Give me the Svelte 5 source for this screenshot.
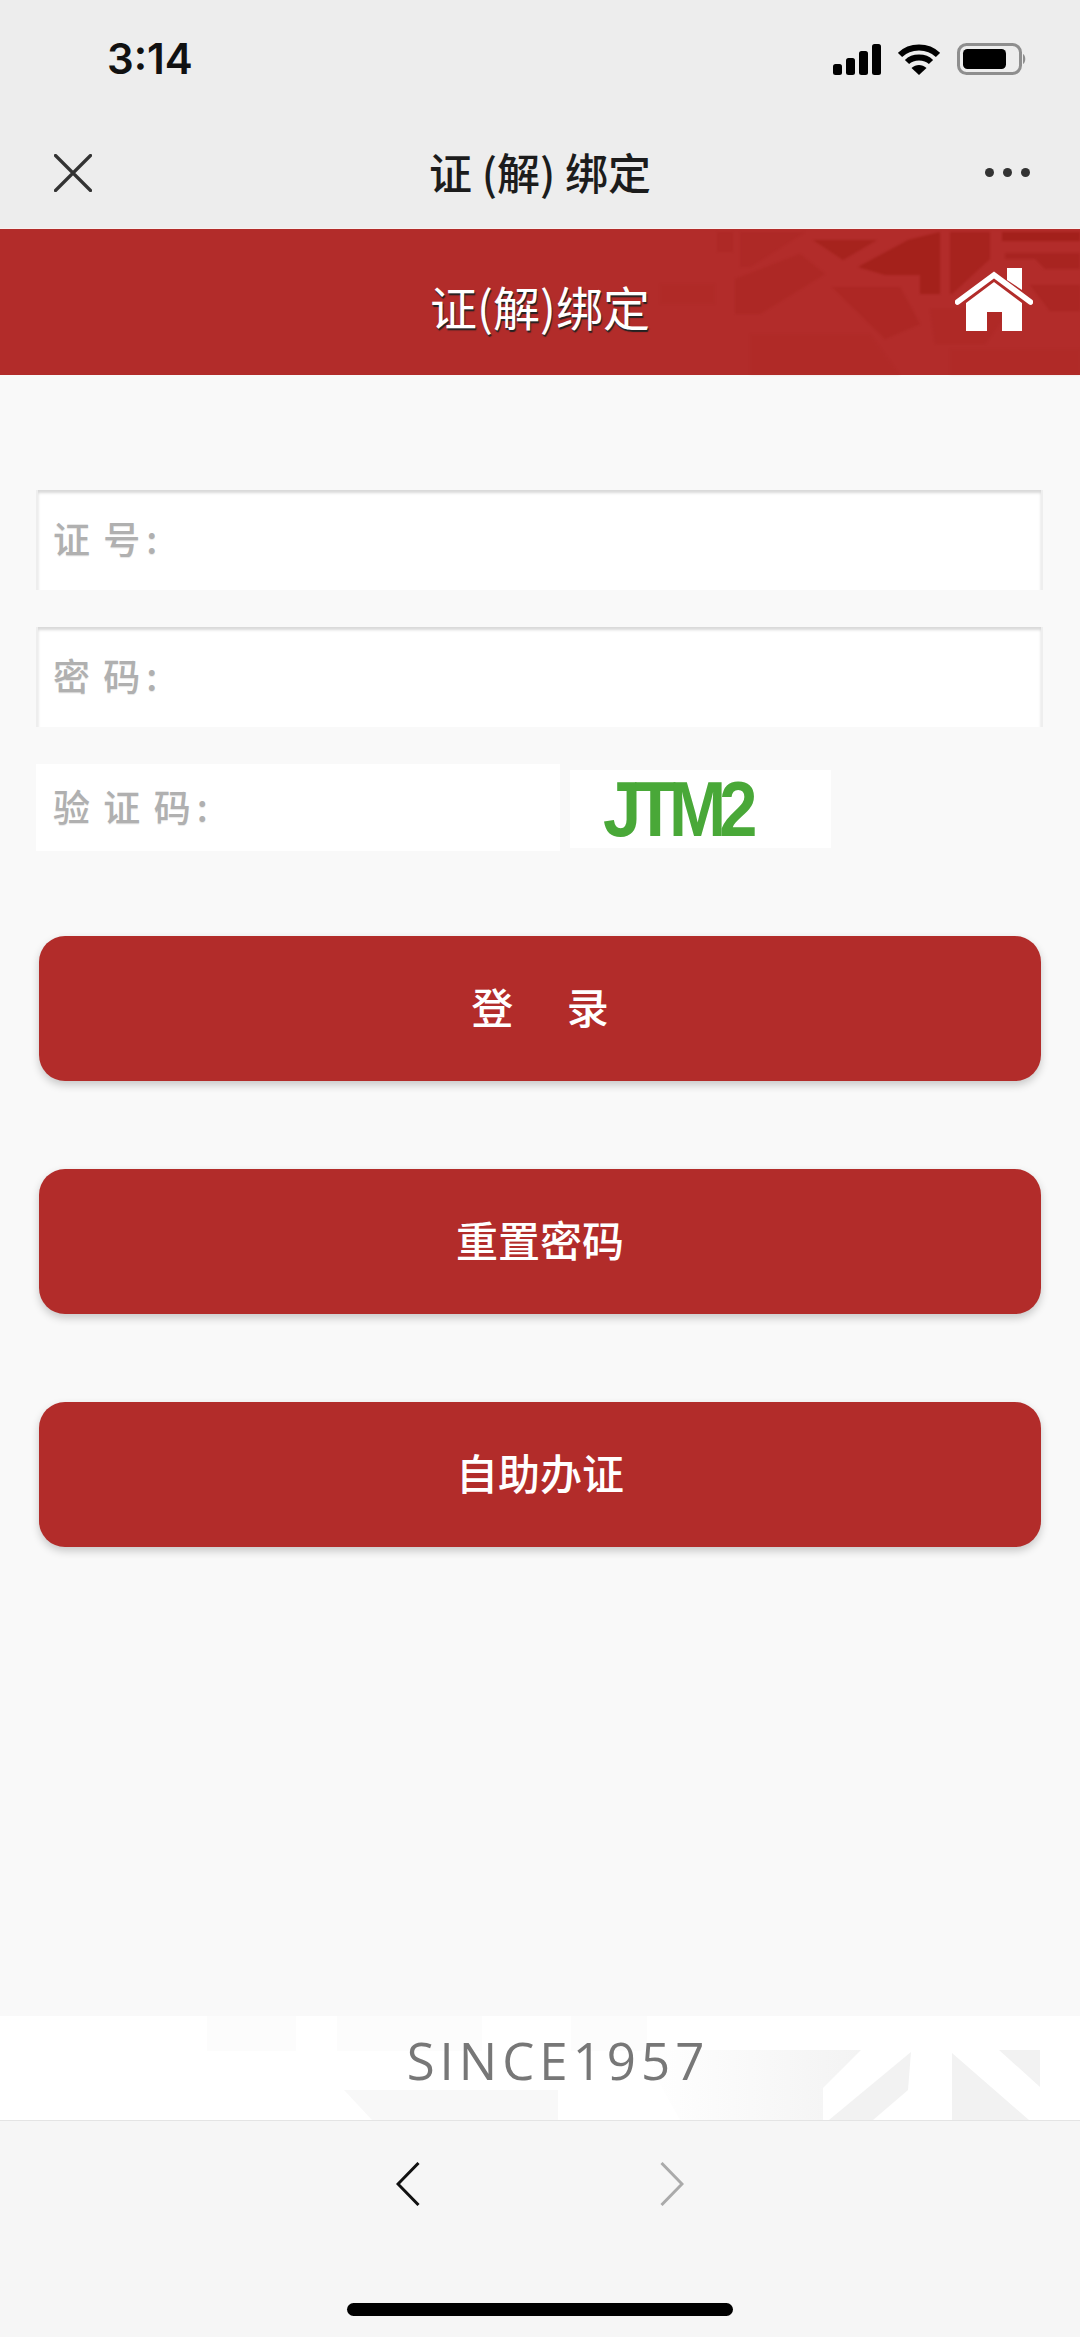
<script>
  const buttons = ['重置密码', '自助办证'];
</script>

<div class="page">
  <div class="chrome">
    <div class="status">
      <span class="time">3:14</span>
      <div class="status-icons">
        <svg width="48" height="31" viewBox="0 0 48 31" fill="#000">
          <rect x="0" y="20" width="9" height="11" rx="2.5" />
          <rect x="13" y="14" width="9" height="17" rx="2.5" />
          <rect x="26" y="7" width="9" height="24" rx="2.5" />
          <rect x="39" y="0" width="9" height="31" rx="2.5" />
        </svg>
        <svg width="42" height="31" viewBox="0 0 42 31" fill="none" stroke="#000" stroke-width="6">
          <path d="M2 11 C12 1 30 1 40 11" />
          <path d="M9 18 C15 12 27 12 33 18" />
          <path d="M21 31 L13.5 24 C18 20 24 20 28.5 24 Z" fill="#000" stroke="none" />
        </svg>
        <svg class="battery" width="69" height="32" viewBox="0 0 69 32" fill="none">
          <rect x="1.5" y="1.5" width="62" height="29" rx="8" stroke="#8e8e8e" stroke-width="3" />
          <rect x="6" y="6" width="43" height="20" rx="4.5" fill="#000" />
          <path d="M66 11 C69 12.5 69 19.5 66 21 Z" fill="#8e8e8e" />
        </svg>
      </div>
    </div>
    <div class="nav">
      <svg class="close" width="38" height="38" viewBox="0 0 38 38" stroke="#333" stroke-width="3.2" stroke-linecap="round">
        <path d="M1.5 1.5 L36.5 36.5 M36.5 1.5 L1.5 36.5" />
      </svg>
      <span class="nav-title">证 (解) 绑定</span>
      <div class="dots"><i></i><i></i><i></i></div>
    </div>
  </div>

  <header class="banner">
    <!-- faint fretwork behind the home icon -->
    <svg class="pattern" width="480" height="146" viewBox="0 0 480 146" fill="#a2201a">
      <path opacity="0.25" d="M117 3 H133 V23 H117 Z" />
      <path opacity="0.2" d="M140 3 H205 L150 38 H140 Z" />
      <path opacity="0.75" d="M213 11 H277 L243 31 Z" />
      <path opacity="0.9" d="M258 38 L308 11 L340 3 V65 H320 V46 H285 Z" />
      <path opacity="0.7" d="M350 3 H390 V30 L352 65 H350 Z" />
      <path opacity="0.95" d="M402 3 H480 V12 H402 Z" />
      <path opacity="0.6" d="M405 24 H480 V40 H445 L435 30 L405 30 Z" />
      <path opacity="0.45" d="M430 56 H480 V82 H450 Z" />
      <path opacity="0.3" d="M135 50 L200 25 L225 45 L160 85 H135 Z" />
      <path opacity="0.35" d="M232 58 L300 58 L320 95 L285 110 Z" />
      <path opacity="0.22" d="M330 80 H410 L385 115 H335 Z" />
      <path opacity="0.12" d="M60 55 H115 V75 H60 Z" />
      <path opacity="0.12" d="M150 105 H270 L300 146 H150 Z" />
      <path opacity="0.12" d="M350 120 H480 V146 H350 Z" />
    </svg>
    <h1>证(解)绑定</h1>
    <svg class="home" width="78" height="64" viewBox="0 0 78 64">
      <path d="M2.5 34 L39 7 L75.5 34" fill="none" stroke="#fff" stroke-width="5.5" stroke-linecap="round" />
      <path d="M52 12 V0 H67 V22 Z" fill="#fff" />
      <path d="M11 35 L39 14 L67 35 V63 H47 V44 H32 V63 H11 Z" fill="#fff" />
    </svg>
  </header>

  <main class="content">
    <form class="form">
      <label class="field"><span>证 号:</span><input type="text" /></label>
      <label class="field"><span>密 码:</span><input type="password" /></label>
      <div class="captcha-row">
        <label class="field captcha"><span>验 证 码:</span><input type="text" /></label>
        <div class="captcha-img"><span>JTM2</span></div>
      </div>
      <div class="actions">
        <button type="button" class="btn login">登 录</button>
        {#each buttons as label}
          <button type="button" class="btn">{label}</button>
        {/each}
      </div>
    </form>
  </main>

  <footer class="since">
    <svg class="since-bg" width="1080" height="104" viewBox="0 0 1080 104">
      <defs>
        <linearGradient id="fade" x1="0" x2="1" y1="0" y2="0">
          <stop offset="0" stop-color="#fff" />
          <stop offset="1" stop-color="#f3f3f3" />
        </linearGradient>
      </defs>
      <path fill="#fcfcfc" d="M207 0 H296 V35 H207 Z M337 0 H482 V35 H337 Z M571 0 H647 V35 H571 Z" />
      <path fill="#f8f8f8" d="M344 74 H558 V104 H372 Z" />
      <path fill="url(#fade)" d="M641 34 H861 L823 72 V104 H680 Z" />
      <path fill="#f2f2f2" d="M911 36 L908 74 L873 104 H829 Z" />
      <path fill="#f2f2f2" d="M952 37 L1029 104 H952 Z" />
      <path fill="#f2f2f2" d="M999 34 H1040 V71 Z" />
    </svg>
    <span>SINCE1957</span>
  </footer>

  <div class="toolbar">
    <div class="arrows">
      <svg width="24" height="44" viewBox="0 0 24 44" fill="none" stroke="#111" stroke-width="3">
        <path d="M22.5 1 L2 22 L22.5 43" />
      </svg>
      <svg width="24" height="44" viewBox="0 0 24 44" fill="none" stroke="#aaa" stroke-width="3">
        <path d="M1.5 1 L22 22 L1.5 43" />
      </svg>
    </div>
    <div class="home-bar"></div>
  </div>
</div>

<style>
  :global(body) {
    margin: 0;
    background: #f9f9f9;
  }
  .page {
    width: 1080px;
    height: 2337px;
    display: flex;
    flex-direction: column;
    font-family: "Noto Sans CJK SC", "Noto Sans", sans-serif;
    overflow: hidden;
  }
  .chrome {
    height: 229px;
    box-sizing: border-box;
    background: #ededed;
    border-bottom: 1px solid #f7f0ef;
    display: flex;
    flex-direction: column;
  }
  .status {
    height: 117px;
    box-sizing: border-box;
    padding: 27px 54px 0 107px;
    display: flex;
    justify-content: space-between;
    align-items: flex-start;
  }
  .time {
    font-family: Inter, sans-serif;
    font-size: 42px;
    font-weight: 600;
    line-height: 64px;
    color: #111;
  }
  .status-icons {
    display: flex;
    gap: 17px;
    align-items: center;
    margin-top: 16px;
  }
  .nav {
    flex: 1;
    display: flex;
    align-items: center;
    justify-content: space-between;
    padding: 0 50px 0 54px;
    position: relative;
  }
  .nav-title {
    position: absolute;
    left: 0;
    right: 0;
    top: 23px;
    text-align: center;
    font-size: 43px;
    font-weight: 500;
    line-height: 62px;
    color: #1c1c1c;
  }
  .dots {
    display: flex;
    gap: 9px;
  }
  .dots i {
    width: 9px;
    height: 9px;
    border-radius: 50%;
    background: #333;
  }
  .banner {
    height: 146px;
    background: #b22c2a;
    position: relative;
    display: flex;
    align-items: center;
    justify-content: center;
    flex-shrink: 0;
  }
  .banner h1 {
    margin: 6px 0 0;
    font-size: 47px;
    font-weight: 400;
    color: #fff;
    text-shadow: 1px 2px 1px #222;
    position: relative;
  }
  .pattern {
    position: absolute;
    right: 0;
    top: 0;
    filter: blur(1px);
  }
  .home {
    position: absolute;
    left: 955px;
    top: 39px;
  }
  .content {
    flex: 1;
    padding: 115px 37px 0 36px;
  }
  .form {
    display: flex;
    flex-direction: column;
  }
  .field {
    display: flex;
    align-items: center;
    height: 100px;
    box-sizing: border-box;
    border-left: 2px solid #eee;
    border-right: 2px solid #eee;
    padding: 0 15px 4px;
    background: #fff;
    box-shadow: inset 0 3px 3px #d9d9d9;
    margin-bottom: 37px;
  }
  .field span {
    flex-shrink: 0;
    color: #b0b0b0;
    font-size: 37px;
    font-weight: 500;
    letter-spacing: 6px;
    word-spacing: -7px;
    text-shadow: 0 1px 1px rgba(0, 0, 0, 0.1);
  }
  .field input {
    flex: 1;
    min-width: 0;
    height: 100%;
    border: none;
    outline: none;
    background: transparent;
  }
  .captcha-row {
    display: flex;
    align-items: flex-start;
    gap: 10px;
  }
  .field.captcha {
    width: 524px;
    height: 87px;
    margin-bottom: 0;
    border: none;
    padding: 0 17px 4px;
    box-shadow: none;
  }
  .captcha-img {
    width: 261px;
    height: 78px;
    margin-top: 6px;
    background: #fff;
    box-sizing: border-box;
    padding-left: 33px;
    display: flex;
    align-items: center;
  }
  .captcha-img span {
    font-family: "Liberation Sans", sans-serif;
    font-size: 78px;
    font-weight: 700;
    line-height: 78px;
    color: #49a838;
    letter-spacing: -8px;
    transform: scaleX(0.88);
    transform-origin: left center;
    filter: blur(0.7px);
  }
  .actions {
    margin-top: 85px;
    padding: 0 2px 0 3px;
    display: flex;
    flex-direction: column;
    gap: 88px;
  }
  .btn {
    height: 145px;
    padding: 0 0 6px;
    border: none;
    border-radius: 26px;
    background: #b22c2a;
    color: #fff;
    font-family: inherit;
    font-size: 42px;
    font-weight: 500;
    box-shadow: 0 4px 8px rgba(0, 0, 0, 0.2);
  }
  .btn.login {
    word-spacing: 44px;
  }
  .since {
    height: 104px;
    background: #fff;
    position: relative;
    display: flex;
    justify-content: center;
    align-items: center;
    flex-shrink: 0;
  }
  .since-bg {
    position: absolute;
    left: 0;
    top: 0;
  }
  .since span {
    position: relative;
    font-family: "Open Sans", sans-serif;
    font-size: 51px;
    font-weight: 400;
    color: #777;
    letter-spacing: 5px;
    margin-left: 36px;
    margin-bottom: 16px;
  }
  .toolbar {
    height: 217px;
    flex-shrink: 0;
    box-sizing: border-box;
    background: #f6f6f6;
    border-top: 1px solid #e4e4e4;
    display: flex;
    flex-direction: column;
    align-items: center;
  }
  .arrows {
    margin-top: 41px;
    width: 288px;
    display: flex;
    justify-content: space-between;
  }
  .home-bar {
    width: 386px;
    height: 13px;
    margin-top: 97px;
    border-radius: 7px;
    background: #000;
  }
</style>
